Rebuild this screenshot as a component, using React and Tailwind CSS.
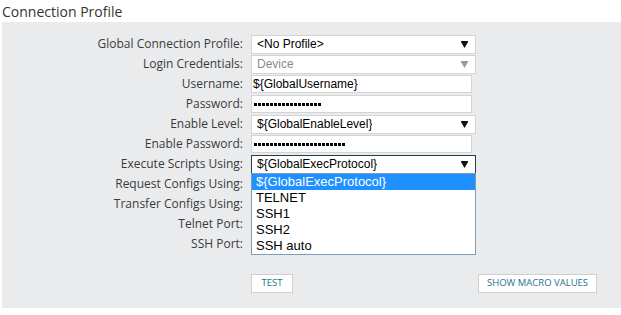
import { useState } from "react";

const labelFont = { fontFamily: '"Open Sans", "DejaVu Sans", sans-serif' };

function Dots({ count }) {
  return (
    <div className="flex items-center gap-[1px] pl-[1px]">
      {Array.from({ length: count }).map((_, i) => (
        <span key={i} className="block w-[3px] h-[3px] bg-black" />
      ))}
    </div>
  );
}

function Caret({ muted }) {
  return (
    <svg width="7" height="7" viewBox="0 0 7 7" className="shrink-0">
      <path d="M0 0 H7 V1 L3.5 7 L0 1 Z" fill={muted ? "#9a9a9a" : "#111"} />
    </svg>
  );
}

function Select({ value, muted, active }) {
  return (
    <div
      className={
        "w-[225px] h-[19px] bg-white flex items-center justify-between pl-[5px] pr-[7px] text-[12px] font-['Liberation_Sans',Arial,sans-serif] border " +
        (active ? "border-[#23404f]" : "border-[#d4d4d4]") +
        (muted ? " text-[#8a8a8a]" : " text-black")
      }
    >
      <span className="truncate">{value}</span>
      <Caret muted={muted} />
    </div>
  );
}

function Input({ children }) {
  return (
    <div className="w-[221px] h-[18px] bg-white border border-[#d4d4d4] flex items-center px-[1px] text-[12px] text-black font-['Liberation_Sans',Arial,sans-serif]">
      {children}
    </div>
  );
}

function Row({ label, children }) {
  return (
    <div className="flex items-center h-[20px]">
      <div
        className="w-[243px] text-right text-[12px] text-[#3a3a3a] pr-[2px] leading-none whitespace-nowrap"
        style={labelFont}
      >
        {label}
      </div>
      <div className="ml-[6px]">{children}</div>
    </div>
  );
}

const options = ["${GlobalExecProtocol}", "TELNET", "SSH1", "SSH2", "SSH auto"];

export default function App() {
  const [selected] = useState(0);

  return (
    <div className="w-[621px] h-[315px] bg-white">
      <div className="h-[22px] pl-[2px] flex items-center text-[14px] text-[#333]" style={labelFont}>
        Connection Profile
      </div>
      <div className="ml-[2px] h-[286px] bg-[#eaebed] pt-[12px]">
        <Row label="Global Connection Profile:">
          <Select value="<No Profile>" />
        </Row>
        <Row label="Login Credentials:">
          <Select value="Device" muted />
        </Row>
        <Row label="Username:">
          <Input>${"{GlobalUsername}"}</Input>
        </Row>
        <Row label="Password:">
          <Input>
            <Dots count={17} />
          </Input>
        </Row>
        <Row label="Enable Level:">
          <Select value="${GlobalEnableLevel}" />
        </Row>
        <Row label="Enable Password:">
          <Input>
            <Dots count={23} />
          </Input>
        </Row>
        <Row label="Execute Scripts Using:">
          <div className="relative">
            <Select value="${GlobalExecProtocol}" active />
            <div className="absolute left-0 top-[18px] w-[225px] bg-white border border-[#7f9db9] z-10 font-['Liberation_Sans',Arial,sans-serif] text-[13px]">
              {options.map((o, i) => (
                <div
                  key={o}
                  className={
                    "h-[16px] leading-[16px] px-[4px] " +
                    (i === selected ? "bg-[#1e90ff] text-white" : "text-black")
                  }
                >
                  {o}
                </div>
              ))}
            </div>
          </div>
        </Row>
        <Row label="Request Configs Using:">
          <div className="w-[225px] h-[18px]" />
        </Row>
        <Row label="Transfer Configs Using:">
          <div className="w-[225px] h-[18px]" />
        </Row>
        <Row label="Telnet Port:">
          <div className="w-[221px] h-[18px]" />
        </Row>
        <Row label="SSH Port:">
          <div className="w-[221px] h-[18px]" />
        </Row>

        <div className="flex items-center mt-[20px] pl-[249px] pr-[24px]">
          <button
            className="h-[19px] w-[42px] bg-white border border-[#cfcfcf] text-[9.5px] text-[#1f7190] flex items-center justify-center"
            style={labelFont}
          >
            TEST
          </button>
          <button
            className="ml-auto h-[19px] w-[119px] bg-white border border-[#cfcfcf] text-[9.5px] text-[#1f7190] flex items-center justify-center"
            style={labelFont}
          >
            SHOW MACRO VALUES
          </button>
        </div>
      </div>
    </div>
  );
}
